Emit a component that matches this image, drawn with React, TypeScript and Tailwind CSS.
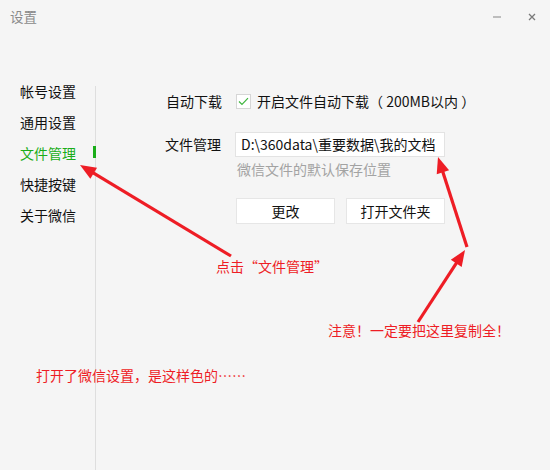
import React from 'react';

const FONT = '"Noto Sans CJK SC", "Microsoft YaHei", sans-serif';
const RED = '#ee1d25';

const menu = ['帐号设置', '通用设置', '文件管理', '快捷按键', '关于微信'];

// arrow head triangle from tail (fx,fy) to tip (tx,ty)
const head = (fx: number, fy: number, tx: number, ty: number, len = 16, w = 6.5) => {
  const dx = tx - fx, dy = ty - fy;
  const L = Math.hypot(dx, dy);
  const ux = dx / L, uy = dy / L;
  const bx = tx - ux * len, by = ty - uy * len;
  return {
    pts: `${tx},${ty} ${bx - uy * w},${by + ux * w} ${bx + uy * w},${by - ux * w}`,
    bx: tx - ux * (len - 2),
    by: ty - uy * (len - 2),
  };
};

const Arrow: React.FC<{ from: [number, number]; to: [number, number] }> = ({ from, to }) => {
  const h = head(from[0], from[1], to[0], to[1]);
  return (
    <g>
      <line x1={from[0]} y1={from[1]} x2={h.bx} y2={h.by} stroke={RED} strokeWidth={3.2} />
      <polygon points={h.pts} fill={RED} />
    </g>
  );
};

export default function App() {
  return (
    <div className="relative w-[550px] h-[470px] bg-[#f5f5f5] flex flex-col overflow-hidden" style={{ fontFamily: FONT }}>
      {/* title bar */}
      <div className="h-[34px] flex items-center pl-[10px] pr-[14px]">
        <span className="text-[13.5px] text-[#8a8a8a] leading-none">设置</span>
        <div className="ml-auto flex items-center gap-[27px]">
          <div className="w-[8px] h-[2px] bg-[#bdbdbd]" />
          <svg width="8" height="8" viewBox="0 0 8 8">
            <path d="M1 1L7 7M7 1L1 7" stroke="#7a7a7a" strokeWidth="1.3" />
          </svg>
        </div>
      </div>

      <div className="flex flex-1">
        {/* sidebar */}
        <div className="w-[95px] pt-[42px]">
          {menu.map((m, i) => (
            <div
              key={m}
              className={`relative h-[31px] flex items-center pl-[20px] text-[14px] ${i === 2 ? 'text-[#1aad19]' : 'text-[#111]'}`}
            >
              {m}
              {i === 2 && <span className="absolute left-[93px] top-[8px] w-[3px] h-[12px] bg-[#1aad19] z-10" />}
            </div>
          ))}
        </div>
        <div className="w-px bg-[#dedede] mt-[52px]" />

        {/* content */}
        <div className="flex flex-col pt-[54px] pl-[70px] text-[14px] text-[#111]">
          <div className="flex items-center h-[26px]">
            <span className="w-[70px]">自动下载</span>
            <div className="w-[15px] h-[15px] border border-[#d6d6d6] bg-white flex items-center justify-center">
              <svg width="11" height="9" viewBox="0 0 11 9">
                <path d="M1 4.5L4 7.5L10 1.2" stroke="#3fb53f" strokeWidth="1.2" fill="none" />
              </svg>
            </div>
            <span className="ml-[6px] whitespace-pre">开启文件自动下载（ 200MB以内 ）</span>
          </div>

          <div className="flex items-center mt-[18px]">
            <span className="w-[70px] -ml-px">文件管理</span>
            <div className="w-[210px] h-[25px] bg-white border border-[#e3e3e3] flex items-center pl-[5px] whitespace-nowrap">
              D:\360data\重要数据\我的文档
            </div>
          </div>
          <div className="ml-[71px] mt-[2px] h-[20px] leading-[20px] text-[#a3a3a3]">微信文件的默认保存位置</div>

          <div className="flex gap-[11px] ml-[70px] mt-[19px]">
            <button className="w-[99px] h-[26px] bg-white border border-[#e6e6e6] text-[14px]">更改</button>
            <button className="w-[99px] h-[26px] bg-white border border-[#e6e6e6] text-[14px]">打开文件夹</button>
          </div>
        </div>
      </div>

      {/* annotations */}
      <svg className="absolute inset-0 pointer-events-none" width="550" height="470">
        <Arrow from={[231, 256]} to={[80, 165]} />
        <Arrow from={[467, 247]} to={[438, 157]} />
        <Arrow from={[418, 322]} to={[465, 250]} />
      </svg>
      <div className="absolute left-[216px] top-[256px] text-[14px] leading-[20px]" style={{ color: RED }}>点击“文件管理”</div>
      <div className="absolute left-[328px] top-[320px] text-[14px] leading-[20px]" style={{ color: RED }}>注意！一定要把这里复制全！</div>
      <div className="absolute left-[36px] top-[365px] text-[14px] leading-[20px]" style={{ color: RED }}>打开了微信设置，是这样色的……</div>
    </div>
  );
}
